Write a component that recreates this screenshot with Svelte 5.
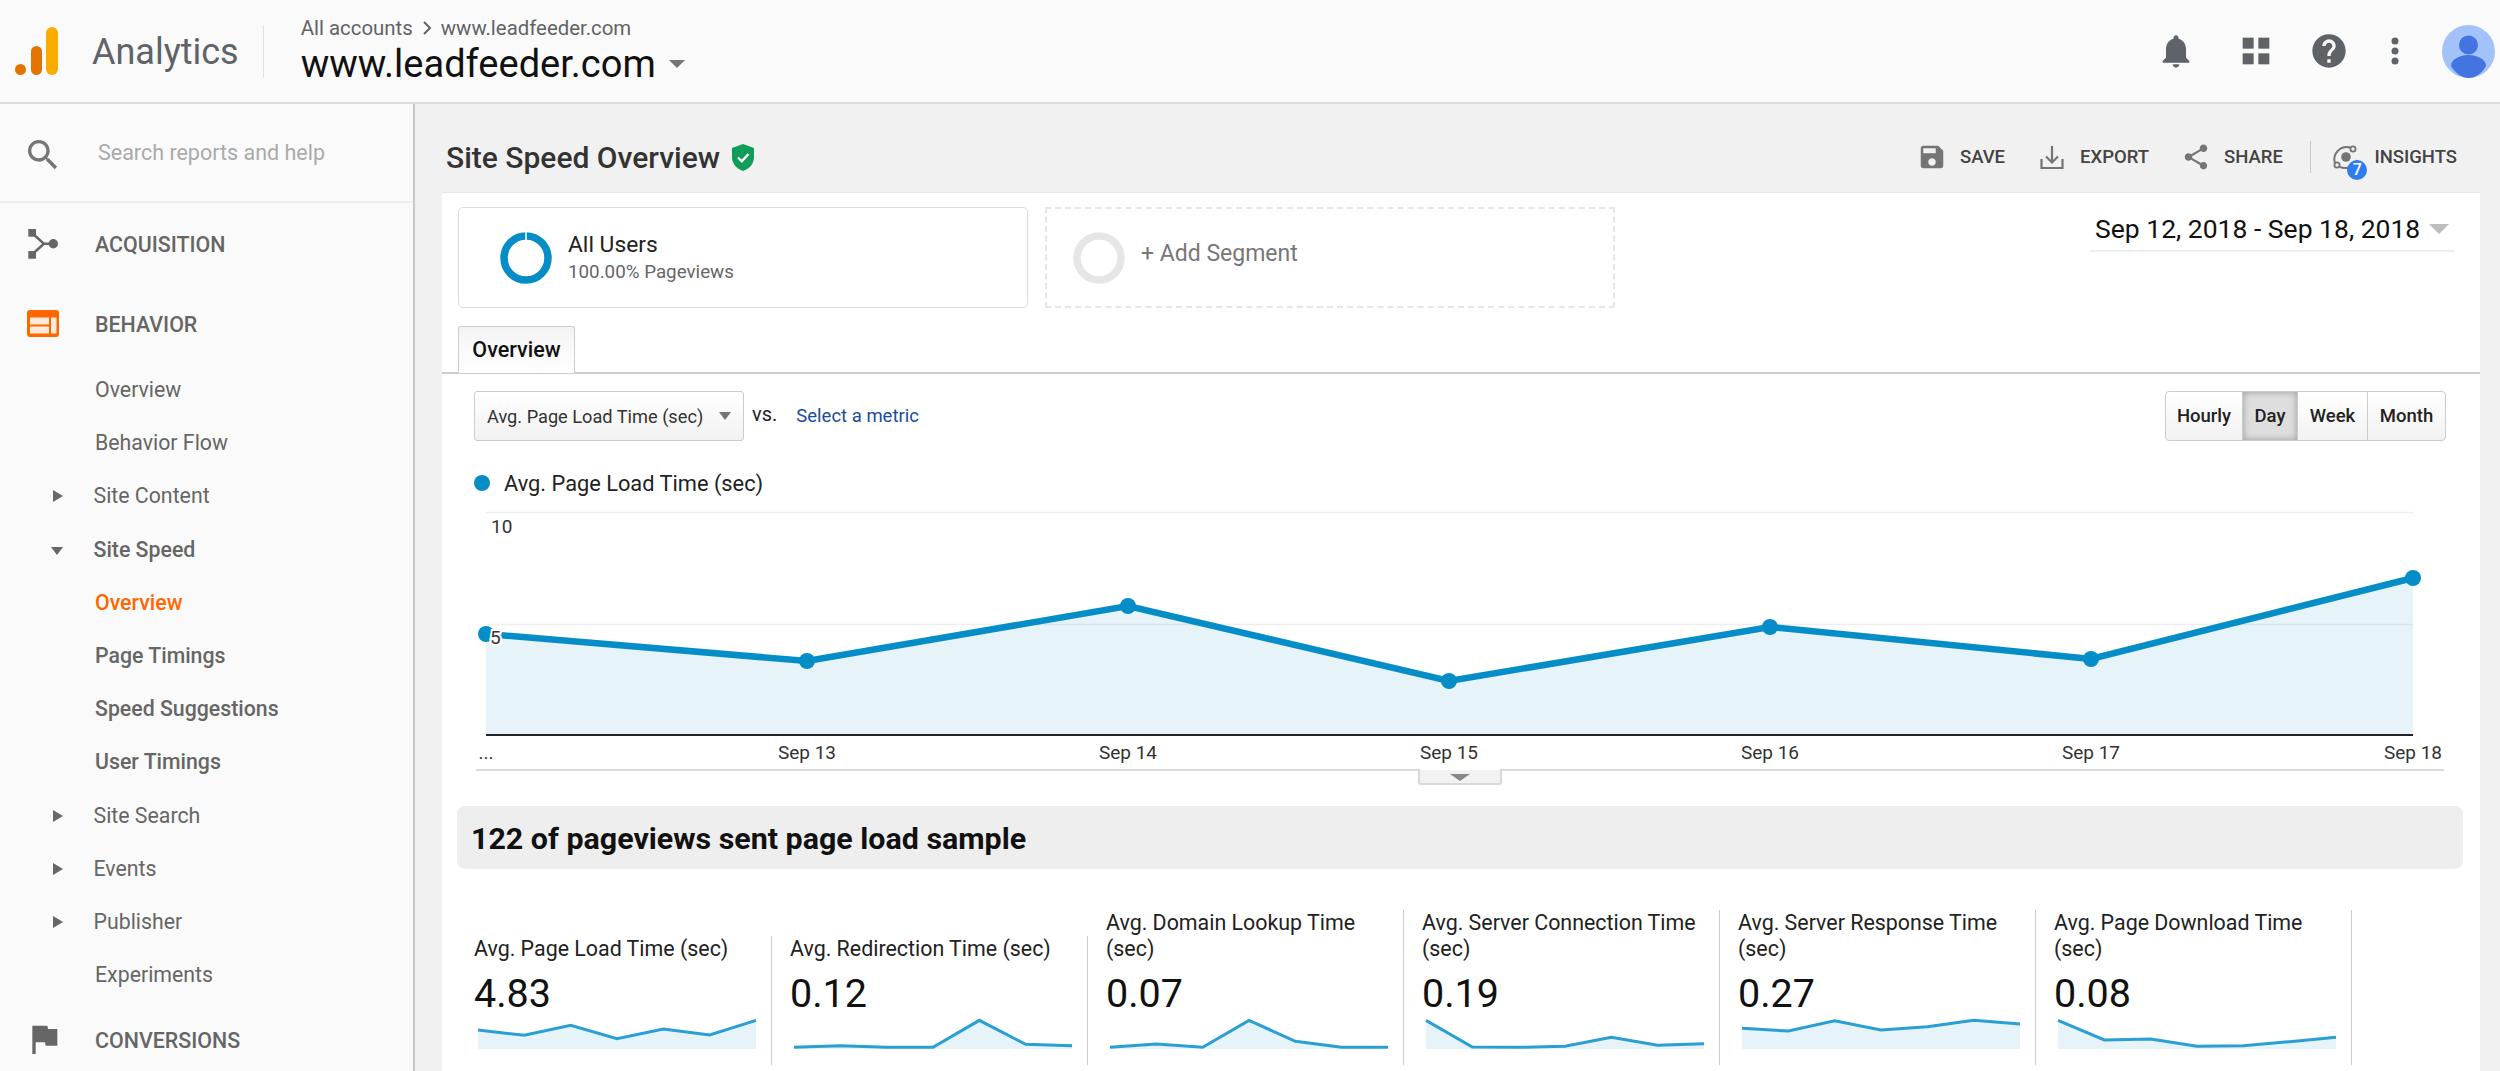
<script>
  const nav = [
    { label: "Overview" },
    { label: "Behavior Flow" },
    { label: "Site Content", arrow: "right" },
    { label: "Site Speed", arrow: "down", strong: true },
    { label: "Overview", strong: true, active: true },
    { label: "Page Timings", strong: true },
    { label: "Speed Suggestions", strong: true },
    { label: "User Timings", strong: true },
    { label: "Site Search", arrow: "right" },
    { label: "Events", arrow: "right" },
    { label: "Publisher", arrow: "right" },
    { label: "Experiments" },
  ];

  // page coordinates, the svg viewBox starts at the panel's corner
  const chart = [
    [486, 632], [807, 659], [1128, 604], [1449, 679],
    [1770, 625], [2091, 657], [2413, 576],
  ];
  const chartLine = chart.map((p) => p.join(",")).join(" ");
  const chartArea = `486,733 ${chartLine} 2413,733`;
  const days = ["Sep 13", "Sep 14", "Sep 15", "Sep 16", "Sep 17", "Sep 18"];

  const metrics = [
    { label: "Avg. Page Load Time (sec)", value: "4.83", spark: [743, 759, 729, 769, 740, 758, 714] },
    { label: "Avg. Redirection Time (sec)", value: "0.12", spark: [795, 790, 795, 795, 714, 786, 790] },
    { label: "Avg. Domain Lookup Time (sec)", value: "0.07", spark: [795, 785, 795, 714, 777, 795, 795] },
    { label: "Avg. Server Connection Time (sec)", value: "0.19", spark: [714, 794, 795, 792, 765, 789, 784] },
    { label: "Avg. Server Response Time (sec)", value: "0.27", spark: [738, 746, 715, 743, 733, 714, 725] },
    { label: "Avg. Page Download Time (sec)", value: "0.08", spark: [714, 773, 770, 792, 790, 778, 765] },
  ];

  const sparkLine = (vals) =>
    vals.map((v, i) => `${(i * 278) / 6},${(v - 713) / 3}`).join(" ");
</script>

<div class="page">
  <header class="topbar">
    <svg class="logo" width="43" height="48" viewBox="0 0 43 48">
      <circle cx="5.5" cy="42.5" r="5.5" fill="#e37400" />
      <rect x="16" y="19" width="11" height="29" rx="5.5" fill="#e37400" />
      <rect x="31" y="0" width="12" height="48" rx="6" fill="#f9ab00" />
    </svg>
    <div class="product">Analytics</div>
    <div class="account">
      <div class="crumbs">
        <span>All accounts</span>
        <svg width="10" height="16" viewBox="0 0 10 16"><path d="M2 2l6 6-6 6" fill="none" stroke="#5f6368" stroke-width="2" /></svg>
        <span>www.leadfeeder.com</span>
      </div>
      <div class="view">www.leadfeeder.com <i class="caret"></i></div>
    </div>
    <div class="actions">
      <svg class="hicon" viewBox="0 0 24 24"><path d="M12 22c1.1 0 2-.9 2-2h-4c0 1.1.9 2 2 2zm6-6v-5c0-3.07-1.63-5.64-4.5-6.32V4c0-.83-.67-1.5-1.5-1.5s-1.5.67-1.5 1.5v.68C7.64 5.36 6 7.92 6 11v5l-2 2v1h16v-1l-2-2z" /></svg>
      <svg class="hicon grid" viewBox="0 0 24 24"><rect x="4" y="4" width="6.6" height="6.6" /><rect x="13.4" y="4" width="6.6" height="6.6" /><rect x="4" y="13.4" width="6.6" height="6.6" /><rect x="13.4" y="13.4" width="6.6" height="6.6" /></svg>
      <svg class="hicon help" viewBox="0 0 24 24"><path d="M12 2C6.48 2 2 6.48 2 12s4.48 10 10 10 10-4.48 10-10S17.52 2 12 2zm1 17h-2v-2h2v2zm2.07-7.75l-.9.92C13.45 12.9 13 13.5 13 15h-2v-.5c0-1.1.45-2.1 1.17-2.83l1.24-1.26c.37-.36.59-.86.59-1.41 0-1.1-.9-2-2-2s-2 .9-2 2H8c0-2.21 1.79-4 4-4s4 1.79 4 4c0 .88-.36 1.68-.93 2.25z" /></svg>
      <svg class="hicon dots" viewBox="0 0 24 24"><circle cx="12" cy="6" r="2.1" /><circle cx="12" cy="12" r="2.1" /><circle cx="12" cy="18" r="2.1" /></svg>
      <svg class="avatar" width="53" height="53" viewBox="0 0 53 53">
        <circle cx="26.5" cy="26.5" r="26.5" fill="#a3c2fa" />
        <circle cx="26.5" cy="20" r="9.5" fill="#4374e0" />
        <path d="M9 41c0-7 9-11 17.5-11S44 34 44 41c-4 7.5-11 12-17.5 12S13 48 9 41z" fill="#4374e0" />
      </svg>
    </div>
  </header>

  <div class="body">
    <aside class="sidebar">
      <div class="search">
        <svg class="search-icon" width="40" height="40" viewBox="0 0 24 24"><path d="M15.5 14h-.79l-.28-.27C15.41 12.59 16 11.11 16 9.5 16 5.91 13.09 3 9.5 3S3 5.91 3 9.5 5.91 16 9.5 16c1.61 0 3.09-.59 4.23-1.57l.27.28v.79l5 4.99L20.49 19l-4.99-5zm-6 0C7.01 14 5 11.99 5 9.5S7.01 5 9.5 5 14 7.01 14 9.5 11.99 14 9.5 14z" /></svg>
        <span>Search reports and help</span>
      </div>
      <div class="section">
        <svg width="40" height="40" viewBox="0 0 40 40">
          <path d="M9 10l12 10.7L9 31.5M21 20.7h9" fill="none" stroke="#666" stroke-width="2.5" />
          <rect x="5.3" y="6" width="7.7" height="7.7" fill="#666" />
          <rect x="5.3" y="28" width="7.7" height="7.7" fill="#666" />
          <circle cx="30.3" cy="20.7" r="4.7" fill="#666" />
        </svg>
        <span>ACQUISITION</span>
      </div>
      <div class="section">
        <svg width="40" height="40" viewBox="0 0 40 40">
          <rect x="4" y="7" width="32" height="27" rx="3" fill="#f60" />
          <rect x="7" y="14.5" width="19" height="7" fill="#ffeadd" />
          <rect x="7" y="23.5" width="19" height="7" fill="#ffeadd" />
          <rect x="28" y="14.5" width="5.5" height="16" fill="#ffeadd" />
        </svg>
        <span>BEHAVIOR</span>
      </div>
      <ul class="sub">
        {#each nav as item}
          <li class:strong={item.strong} class:active={item.active} class:has-arrow={item.arrow}>
            {#if item.arrow}<i class={`arrow ${item.arrow}`}></i>{/if}
            {item.label}
          </li>
        {/each}
      </ul>
      <div class="section">
        <svg class="flag" width="40" height="40" viewBox="0 0 24 24"><path d="M14.4 6L14 4H5v17h2v-7h5.6l.4 2h7V6z" /></svg>
        <span>CONVERSIONS</span>
      </div>
    </aside>

    <main class="main">
      <div class="titlebar">
        <h1>Site Speed Overview</h1>
        <svg class="shield" width="22" height="27" viewBox="0 0 22 27">
          <path d="M11 0l11 4v9c0 7-5 12-11 14C5 25 0 20 0 13V4z" fill="#0f9d58" />
          <path d="M6 13.5l3.8 3.8L16.5 10" fill="none" stroke="#fff" stroke-width="2.4" />
        </svg>
        <div class="tools">
          <div class="tool">
            <svg viewBox="0 0 24 24"><path d="M17 3H5c-1.11 0-2 .9-2 2v14c0 1.1.89 2 2 2h14c1.1 0 2-.9 2-2V7l-4-4zm-5 16c-1.66 0-3-1.34-3-3s1.34-3 3-3 3 1.34 3 3-1.34 3-3 3zm3-10H5V5h10v4z" /></svg>
            SAVE
          </div>
          <div class="tool">
            <svg viewBox="0 0 30 30"><path d="M4.5 17v9h21v-9M15 4v16M9 14.5l6 6 6-6" fill="none" stroke="#757575" stroke-width="2.2" /></svg>
            EXPORT
          </div>
          <div class="tool">
            <svg viewBox="0 0 24 24"><path d="M18 16.08c-.76 0-1.44.3-1.96.77L8.91 12.7c.05-.23.09-.46.09-.7s-.04-.47-.09-.7l7.05-4.11c.54.5 1.25.81 2.04.81 1.66 0 3-1.34 3-3s-1.34-3-3-3-3 1.34-3 3c0 .24.04.47.09.7L8.04 9.81C7.5 9.31 6.79 9 6 9c-1.66 0-3 1.34-3 3s1.34 3 3 3c.79 0 1.5-.31 2.04-.81l7.12 4.16c-.05.21-.08.43-.08.65 0 1.61 1.31 2.92 2.92 2.92 1.61 0 2.92-1.31 2.92-2.92s-1.31-2.92-2.92-2.92z" /></svg>
            SHARE
          </div>
          <div class="tool-sep"></div>
          <div class="tool insights">
            <svg viewBox="0 0 30 30">
              <circle cx="15" cy="15" r="4.8" fill="#757575" />
              <path d="M4 21C1 12 9 3 19.5 5.5M9 25c6 2.5 14 .5 17-7" fill="none" stroke="#757575" stroke-width="2" />
              <circle cx="22" cy="7" r="2.6" fill="#f1f1f1" stroke="#757575" stroke-width="1.8" />
              <circle cx="6" cy="23" r="2.6" fill="#f1f1f1" stroke="#757575" stroke-width="1.8" />
            </svg>
            <b class="badge">7</b>
            INSIGHTS
          </div>
        </div>
      </div>

      <section class="panel">
        <div class="segments">
          <div class="segment">
            <svg width="52" height="52" viewBox="0 0 52 52"><circle cx="26" cy="26" r="22" fill="none" stroke="#058dc7" stroke-width="7.5" /><path d="M26 0v8" stroke="#fff" stroke-width="1.5" /></svg>
            <div>
              <div class="seg-name">All Users</div>
              <div class="seg-sub">100.00% Pageviews</div>
            </div>
          </div>
          <div class="segment add">
            <svg width="52" height="52" viewBox="0 0 52 52"><circle cx="26" cy="26" r="22" fill="none" stroke="#e6e6e6" stroke-width="7.5" /></svg>
            <div class="seg-add">+ Add Segment</div>
          </div>
          <div class="dates">Sep 12, 2018 - Sep 18, 2018 <i class="caret pale"></i></div>
        </div>

        <div class="tabs"><div class="tab">Overview</div></div>

        <div class="controls">
          <div class="select">Avg. Page Load Time (sec) <i class="caret small"></i></div>
          <span class="vs">vs.</span>
          <span class="metric-link">Select a metric</span>
          <div class="periods">
            <span class="hourly">Hourly</span>
            <span class="day">Day</span>
            <span class="week">Week</span>
            <span class="month">Month</span>
          </div>
        </div>

        <div class="legend"><i></i>Avg. Page Load Time (sec)</div>

        <svg class="chart" width="2038" height="290" viewBox="442 500 2038 290">
          <path d="M486 510.5H2413M486 622.5H2413" stroke="#eee" stroke-width="1.5" />
          <polygon points={chartArea} fill="#058dc7" fill-opacity="0.1" />
          <path d="M486 733H2413" stroke="#222" stroke-width="2" />
          <polyline points={chartLine} fill="none" stroke="#058dc7" stroke-width="6.5" />
          {#each chart as p}
            <circle cx={p[0]} cy={p[1]} r="8" fill="#058dc7" />
          {/each}
          <text class="ylabel" x="491" y="531">10</text>
          <text class="ylabel halo" x="490" y="642">5</text>
          <text class="xlabel" x="486" y="757" text-anchor="middle">...</text>
          {#each days as d, i}
            <text class="xlabel" x={chart[i + 1][0]} y="757" text-anchor="middle">{d}</text>
          {/each}
          <path d="M476 768H1419v12q0 2 2 2h78q2 0 2-2v-12H2444" fill="#f2f2f2" stroke="#d9d9d9" stroke-width="2" />
          <path d="M1450 772h20l-10 7z" fill="#888" />
        </svg>

        <div class="banner">122 of pageviews sent page load sample</div>

        <div class="metrics">
          {#each metrics as m}
            <div class="metric">
              <div class="m-label">{m.label}</div>
              <div class="m-value">{m.value}</div>
              <svg class="spark" width="278" height="29" viewBox="0 0 278 29">
                <polygon points={`0,29 ${sparkLine(m.spark)} 278,29`} fill="#058dc7" fill-opacity="0.1" />
                <polyline points={sparkLine(m.spark)} fill="none" stroke="#2a9fd4" stroke-width="3" />
              </svg>
            </div>
          {/each}
        </div>
      </section>
    </main>
  </div>
</div>

<style>
  :global(body) {
    margin: 0;
    background: #f1f1f1;
    font-family: Roboto, "Liberation Sans", sans-serif;
  }
  .page {
    height: 100vh;
    display: flex;
    flex-direction: column;
    overflow: hidden;
  }
  .topbar {
    height: 102px;
    flex: none;
    display: flex;
    align-items: center;
    background: #fafafa;
    border-bottom: 2px solid #dcdcdc;
  }
  .logo {
    margin-left: 15px;
  }
  .product {
    margin-left: 34px;
    padding-right: 24px;
    height: 53px;
    line-height: 54px;
    font-size: 36px;
    color: #5f6368;
    border-right: 1px solid #e0e0e0;
  }
  .account {
    margin-left: 37px;
    color: #5f6368;
  }
  .crumbs {
    display: flex;
    align-items: center;
    gap: 9px;
    font-size: 20.4px;
    line-height: 24px;
  }
  .view {
    font-size: 38px;
    line-height: 44px;
    color: #111;
    margin-top: 2px;
    display: flex;
    align-items: center;
    gap: 13px;
  }
  .caret {
    display: inline-block;
    width: 0;
    height: 0;
    border-left: 8px solid transparent;
    border-right: 8px solid transparent;
    border-top: 8px solid #757575;
  }
  .caret.pale {
    border-left-width: 10px;
    border-right-width: 10px;
    border-top: 10px solid #bdbdbd;
  }
  .caret.small {
    border-left-width: 6px;
    border-right-width: 6px;
  }
  .actions {
    margin-left: auto;
    margin-right: 5px;
    display: flex;
    align-items: center;
    fill: #5f6368;
  }
  .hicon {
    width: 40px;
    height: 40px;
  }
  .grid {
    margin-left: 40px;
  }
  .help {
    margin-left: 33px;
  }
  .dots {
    margin-left: 26px;
  }
  .avatar {
    margin-left: 27px;
  }

  .body {
    flex: 1;
    display: flex;
    min-height: 0;
  }
  .sidebar {
    width: 413px;
    flex: none;
    background: #fafafa;
    border-right: 2px solid #c8c8c8;
    color: #666;
  }
  .search {
    height: 97px;
    display: flex;
    align-items: center;
    border-bottom: 2px solid #eee;
    font-size: 21.5px;
    color: #aaa;
  }
  .search-icon {
    margin-left: 23px;
    margin-right: 35px;
    fill: #757575;
    margin-top: 4px;
  }
  .section {
    height: 80px;
    display: flex;
    align-items: center;
    gap: 32px;
    padding-left: 23px;
    font-size: 21.4px;
    font-weight: 500;
  }
  .section span {
    margin-top: 2px;
  }
  .flag {
    fill: #666;
    margin-left: 1px;
    margin-right: -1px;
  }
  .sub {
    list-style: none;
    margin: 0 0 -2px;
    padding: 0;
  }
  .sub li {
    height: 53.2px;
    line-height: 54.2px;
    padding-left: 95px;
    font-size: 21.3px;
    position: relative;
  }
  .sub li.has-arrow {
    padding-left: 93.5px;
  }
  .sub li.strong {
    font-weight: 500;
  }
  .sub li.active {
    color: #f60;
  }
  .arrow {
    position: absolute;
    width: 0;
    height: 0;
  }
  .arrow.right {
    left: 53px;
    top: 21px;
    border-top: 6px solid transparent;
    border-bottom: 6px solid transparent;
    border-left: 10px solid #666;
  }
  .arrow.down {
    left: 51px;
    top: 24px;
    border-left: 6px solid transparent;
    border-right: 6px solid transparent;
    border-top: 8px solid #666;
  }

  .main {
    flex: 1;
    min-width: 0;
  }
  .titlebar {
    height: 70px;
    padding: 18px 43px 0 31px;
    display: flex;
    align-items: center;
  }
  h1 {
    margin: 0;
    font-size: 30px;
    font-weight: 500;
    color: #333;
  }
  .shield {
    margin-left: 12px;
  }
  .tools {
    margin-left: auto;
    display: flex;
    align-items: center;
    gap: 32px;
  }
  .tool {
    display: flex;
    align-items: center;
    gap: 13px;
    font-size: 18.5px;
    font-weight: 500;
    color: #444;
    position: relative;
  }
  .tool svg {
    width: 30px;
    height: 30px;
    fill: #757575;
  }
  .tool-sep {
    width: 1px;
    height: 32px;
    background: #ccc;
    margin: 0 -11.5px 0 -5px;
  }
  .badge {
    position: absolute;
    left: 16px;
    top: 18px;
    width: 20px;
    height: 20px;
    border-radius: 50%;
    background: #2f7cf0;
    color: #fff;
    font-size: 16px;
    font-weight: 500;
    line-height: 20px;
    text-align: center;
  }

  .panel {
    margin-left: 27px;
    width: 2038px;
    height: 880px;
    box-sizing: border-box;
    background: #fff;
    border-top: 1px solid #e6e6e6;
  }
  .segments {
    display: flex;
    padding: 14px 25px 0 16px;
    gap: 17px;
  }
  .segment {
    width: 570px;
    height: 101px;
    box-sizing: border-box;
    border: 1px solid #ddd;
    border-radius: 5px;
    display: flex;
    align-items: center;
    gap: 16px;
    padding-left: 41px;
  }
  .segment.add {
    border: 2px dashed #e6e6e6;
    border-radius: 0;
    gap: 16px;
    padding-left: 26px;
  }
  .seg-name {
    font-size: 22.8px;
    line-height: 28px;
    color: #222;
  }
  .seg-sub {
    font-size: 18.8px;
    line-height: 26px;
    color: #666;
  }
  .seg-add {
    font-size: 23px;
    color: #777;
    margin-top: -9px;
  }
  .dates {
    margin-left: auto;
    width: 365px;
    height: 45px;
    box-sizing: border-box;
    padding: 0 0 0 5px;
    display: flex;
    align-items: center;
    gap: 9px;
    font-size: 26.5px;
    color: #111;
    border-bottom: 2px solid #eee;
  }
  .tabs {
    margin-top: 18px;
    padding-left: 16px;
    height: 46px;
    border-bottom: 2px solid #ccc;
  }
  .tab {
    width: 117px;
    height: 47px;
    box-sizing: border-box;
    border: 1px solid #ccc;
    border-bottom: none;
    border-radius: 3px 3px 0 0;
    background: linear-gradient(#f4f4f4, #fff);
    font-size: 21.5px;
    font-weight: 500;
    line-height: 46px;
    text-align: center;
    color: #111;
  }
  .controls {
    margin-top: 17px;
    height: 50px;
    padding: 0 34px 0 32px;
    display: flex;
    align-items: center;
  }
  .select {
    width: 270px;
    height: 50px;
    box-sizing: border-box;
    border: 1px solid #ccc;
    border-radius: 3px;
    background: linear-gradient(#fff, #f2f2f2);
    display: flex;
    align-items: center;
    justify-content: space-between;
    padding: 0 12px;
    font-size: 18.2px;
    color: #333;
  }
  .vs {
    margin-left: 8px;
    margin-top: -4px;
    font-size: 20px;
    color: #222;
  }
  .metric-link {
    margin-left: 19px;
    font-size: 18.5px;
    color: #1a4aa0;
  }
  .periods {
    margin-left: auto;
    display: flex;
    height: 50px;
    box-sizing: border-box;
    border: 1px solid #ccc;
    border-radius: 4px;
    background: linear-gradient(#fff, #f2f2f2);
    font-size: 18.5px;
    font-weight: 500;
    color: #222;
  }
  .periods span {
    box-sizing: border-box;
    line-height: 48px;
    text-align: center;
    border-right: 1px solid #ccc;
  }
  .hourly {
    width: 77px;
  }
  .day {
    width: 55px;
    background: #dedede;
    box-shadow: inset 0 0 7px #999;
  }
  .week {
    width: 70px;
  }
  .month {
    width: 77px;
    border-right: none !important;
  }
  .legend {
    margin-top: 28px;
    margin-left: 32px;
    height: 28px;
    display: flex;
    align-items: center;
    gap: 14px;
    font-size: 21.8px;
    color: #222;
  }
  .legend i {
    width: 16px;
    height: 16px;
    border-radius: 50%;
    background: #058dc7;
  }
  .chart {
    display: block;
    margin-top: 5px;
  }
  .ylabel {
    font-size: 19px;
    fill: #333;
  }
  .halo {
    paint-order: stroke;
    stroke: #fff;
    stroke-width: 4px;
  }
  .xlabel {
    font-size: 19px;
    fill: #333;
  }
  .banner {
    margin: 14px 17px 0 15px;
    height: 63px;
    line-height: 65px;
    padding-left: 14px;
    border-radius: 8px;
    background: #eee;
    font-size: 30.4px;
    font-weight: 700;
    color: #111;
  }
  .metrics {
    margin-top: 41px;
    margin-left: 14px;
    display: flex;
    align-items: flex-end;
  }
  .metric {
    width: 316px;
    box-sizing: border-box;
    padding: 0 10px 16px 18px;
    border-right: 1px solid #ccc;
  }
  .m-label {
    font-size: 21.4px;
    line-height: 26px;
    color: #222;
  }
  .m-value {
    margin-top: 8px;
    font-size: 39.5px;
    line-height: 48px;
    color: #111;
  }
  .spark {
    display: block;
    margin: 2px 0 0 4px;
    overflow: visible;
  }
</style>
